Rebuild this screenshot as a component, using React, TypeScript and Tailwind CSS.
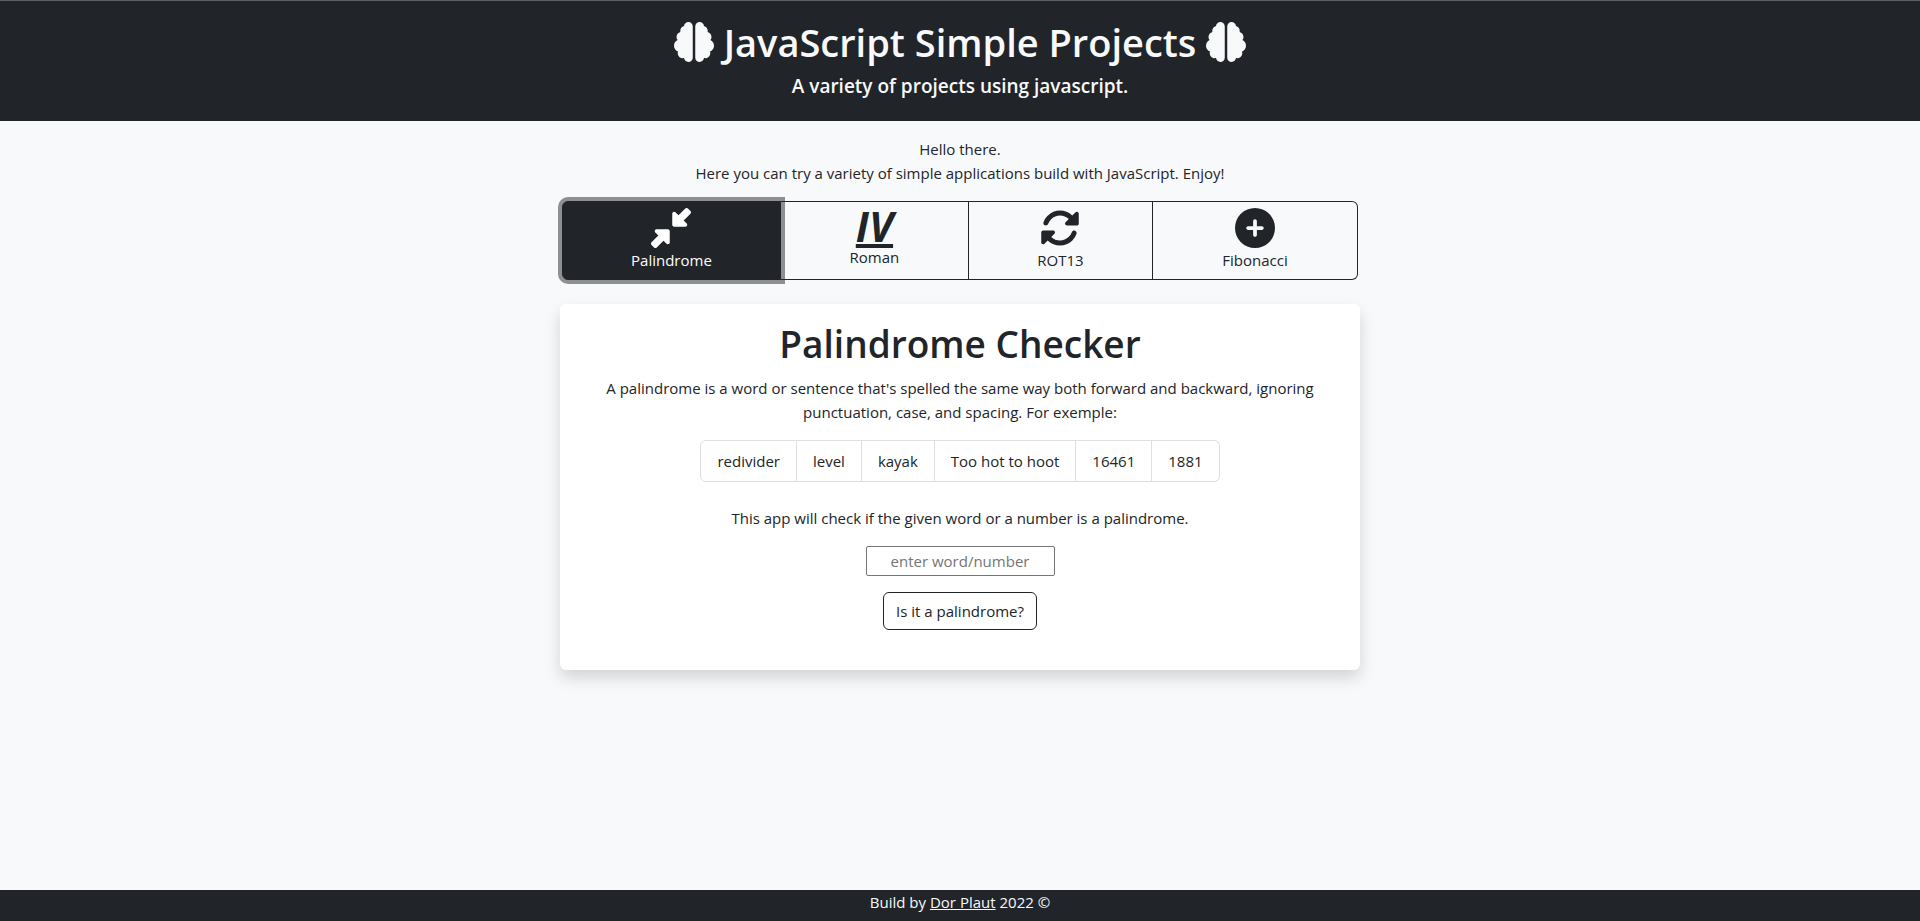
import { useState } from "react";
import type { ReactNode } from "react";
import {
  FaBrain,
  FaCirclePlus,
  FaDownLeftAndUpRightToCenter,
  FaRotate,
} from "react-icons/fa6";

type Tab = { name: string; grow: string; icon: ReactNode };

const tabs: Tab[] = [
  {
    name: "Palindrome",
    grow: "grow-[218]",
    icon: <FaDownLeftAndUpRightToCenter className="size-10" />,
  },
  {
    name: "Roman",
    grow: "grow-[188]",
    icon: (
      <span className="flex h-[37px] items-start text-[41px] leading-9 font-bold italic underline decoration-4 underline-offset-2">
        IV
      </span>
    ),
  },
  { name: "ROT13", grow: "grow-[184]", icon: <FaRotate className="size-10" /> },
  { name: "Fibonacci", grow: "grow-[205]", icon: <FaCirclePlus className="size-10" /> },
];

const examples = ["redivider", "level", "kayak", "Too hot to hoot", "16461", "1881"];

export default function App() {
  const [active, setActive] = useState("Palindrome");
  const [word, setWord] = useState("");
  const [result, setResult] = useState("");

  const check = () => {
    const clean = word.toLowerCase().replace(/[^a-z0-9]/g, "");
    if (!clean) return;
    setResult(clean === [...clean].reverse().join("") ? "Yes, it is!" : "No, it is not.");
  };

  return (
    <div className="flex min-h-screen flex-col bg-[#f8f9fb] text-center font-['Open_Sans',sans-serif] text-[15px] leading-6 text-[#212529]">
      <header className="border-t border-[#5c6064] bg-[#212529] px-4 pt-[17px] pb-[23px] text-[#f8f9fa]">
        <h1 className="mb-2 flex items-center justify-center gap-2.5 text-[38px] leading-[48px] font-semibold">
          <FaBrain className="size-10" />
          JavaScript Simple Projects
          <FaBrain className="size-10" />
        </h1>
        <p className="text-[19px] leading-6 font-semibold">A variety of projects using javascript.</p>
      </header>

      <main className="mx-auto w-full max-w-[800px] grow pt-4">
        <p>Hello there.</p>
        <p className="mb-4">
          Here you can try a variety of simple applications build with JavaScript. Enjoy!
        </p>

        <div role="group" aria-label="Projects" className="mx-0.5 mb-6 flex">
          {tabs.map((tab) => (
            <button
              key={tab.name}
              type="button"
              aria-pressed={active === tab.name}
              onClick={() => setActive(tab.name)}
              className={`flex h-[79px] basis-0 flex-col items-center border-y border-r border-[#212529] pt-1.5 first:rounded-l-md first:border-l last:rounded-r-md ${tab.grow} ${
                active === tab.name
                  ? "z-10 bg-[#212529] text-white shadow-[0_0_0_4px_rgba(33,37,41,0.5)]"
                  : ""
              }`}
            >
              {tab.icon}
              <span>{tab.name}</span>
            </button>
          ))}
        </div>

        <section className="rounded-md bg-white px-8 pt-4 pb-10 shadow-[0_8px_16px_rgba(0,0,0,0.15)]">
          <h2 className="mb-2 text-[37px] leading-[48px] font-semibold">Palindrome Checker</h2>
          <p className="mb-4">
            A palindrome is a word or sentence that's spelled the same way both forward and backward,
            ignoring punctuation, case, and spacing. For exemple:
          </p>
          <ul className="mb-6 flex justify-center">
            {examples.map((example) => (
              <li
                key={example}
                className="border-y border-r border-[#dfdfdf] px-4 py-2 first:rounded-l-md first:border-l last:rounded-r-md"
              >
                {example}
              </li>
            ))}
          </ul>
          <p className="mb-4">This app will check if the given word or a number is a palindrome.</p>
          <div className="flex flex-col items-center gap-4">
            <input
              type="text"
              aria-label="Word or number"
              placeholder="enter word/number"
              value={word}
              onChange={(event) => setWord(event.target.value)}
              className="h-[30px] w-[189px] rounded-xs border border-[#767676] bg-white text-center placeholder:text-[#757575]"
            />
            <button
              type="button"
              onClick={check}
              className="h-[38px] rounded-md border border-[#212529] px-3"
            >
              Is it a palindrome?
            </button>
          </div>
          {result && <p className="mt-4">{result}</p>}
        </section>
      </main>

      <footer className="bg-[#212529] pb-[7px] text-[#f8f9fa]">
        Build by{" "}
        <a href="#" className="underline">
          Dor Plaut
        </a>{" "}
        2022 ©
      </footer>
    </div>
  );
}
